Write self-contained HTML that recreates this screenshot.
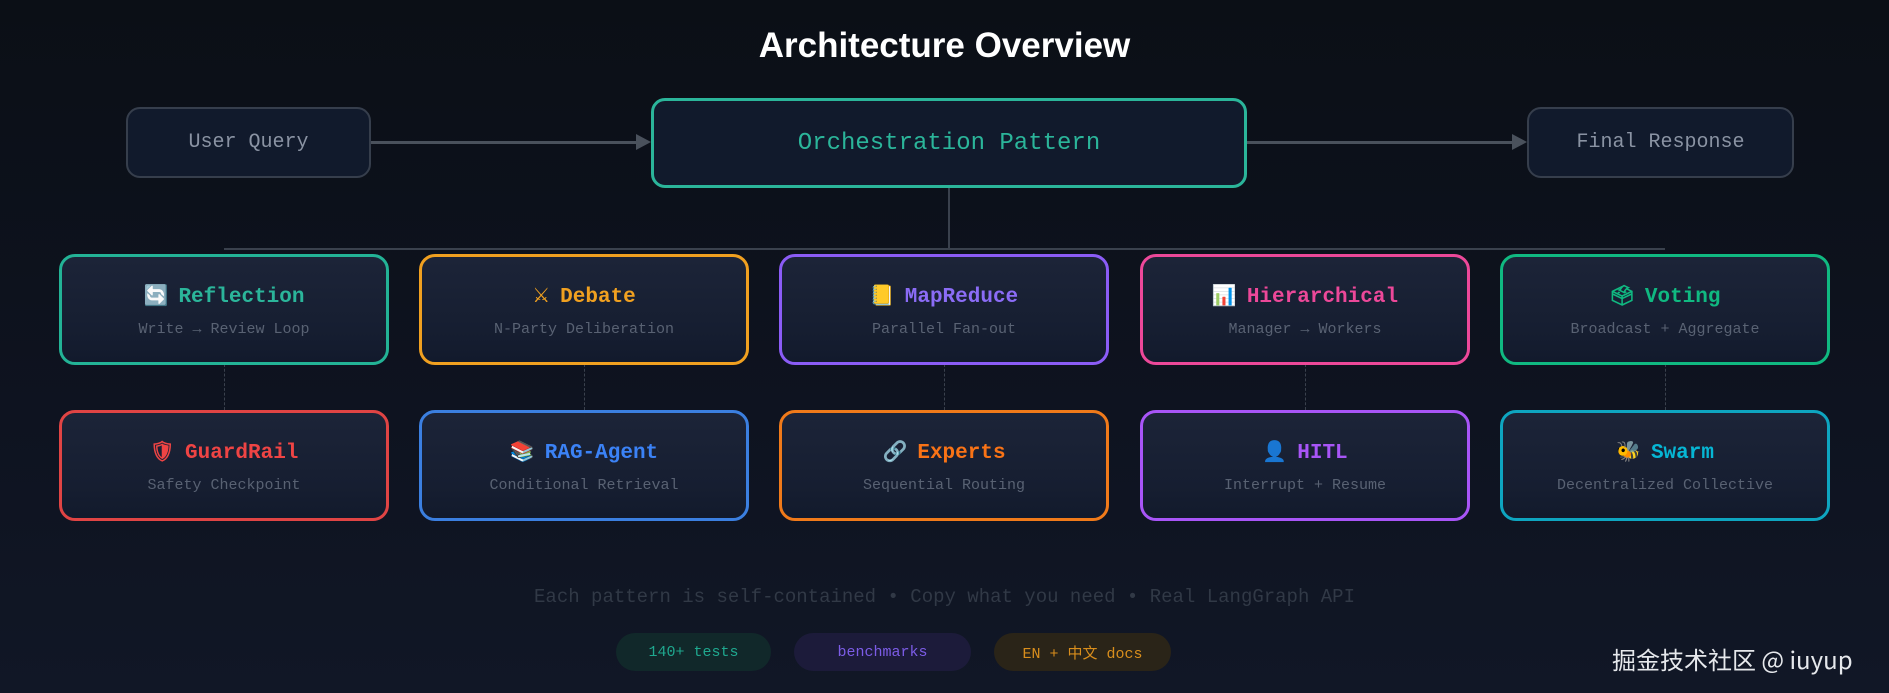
<!DOCTYPE html>
<html><head><meta charset="utf-8"><style>
*{margin:0;padding:0;box-sizing:border-box}
body{width:1889px;height:693px;overflow:hidden;background:linear-gradient(180deg,#0b0f16 0%,#0e1320 60%,#111726 100%);font-family:"Liberation Mono","Noto Sans CJK SC",monospace;position:relative}
.abs{position:absolute}
h1{position:absolute;top:26px;left:0;width:1889px;text-align:center;color:#fff;font:bold 35px "Liberation Sans",sans-serif}
.box{position:absolute;border-radius:14px;display:flex;align-items:center;justify-content:center;background:#111a2c}
.card{position:absolute;width:330px;height:111px;border:3px solid;border-radius:16px;background:linear-gradient(180deg,#1c2438 0%,#161e31 70%,#121a2c 100%);text-align:center}
.card .t{margin-top:26px;font-size:21px;font-weight:bold}
.card .s{margin-top:12px;font-size:15px;color:#596273}
.ic{font-size:20px;margin-right:10px;font-family:"DejaVu Sans",sans-serif}
.line{position:absolute;background:#3a414d}
.dash{position:absolute;width:0;border-left:1px dashed #3a414d}
.badge{position:absolute;top:633px;height:38px;border-radius:19px;display:flex;align-items:center;justify-content:center;font-size:15px}
</style></head><body>
<h1>Architecture Overview</h1>
<div class="box" style="left:126px;top:107px;width:245px;height:71px;border:2px solid #363e4c;color:#8a93a3;font-size:20px">User Query</div>
<div class="box" style="left:651px;top:98px;width:596px;height:90px;border:3px solid #2bb59a;color:#2bb59a;font-size:24px">Orchestration Pattern</div>
<div class="box" style="left:1527px;top:107px;width:267px;height:71px;border:2px solid #363e4c;color:#8a93a3;font-size:20px">Final Response</div>
<div class="line" style="left:371px;top:141px;width:270px;height:3px;background:#4a515c"></div>
<div class="abs" style="left:636px;top:134px;border-left:15px solid #4a515c;border-top:8px solid transparent;border-bottom:8px solid transparent"></div>
<div class="line" style="left:1247px;top:141px;width:270px;height:3px;background:#4a515c"></div>
<div class="abs" style="left:1512px;top:134px;border-left:15px solid #4a515c;border-top:8px solid transparent;border-bottom:8px solid transparent"></div>
<div class="line" style="left:948px;top:188px;width:2px;height:61px"></div>
<div class="line" style="left:224px;top:248px;width:1441px;height:2px"></div>
<div class="dash" style="left:224px;top:364px;height:46px"></div>
<div class="dash" style="left:584px;top:364px;height:46px"></div>
<div class="dash" style="left:944px;top:364px;height:46px"></div>
<div class="dash" style="left:1305px;top:364px;height:46px"></div>
<div class="dash" style="left:1665px;top:364px;height:46px"></div>

<div class="card" style="left:59px;top:254px;border-color:#23b396"><div class="t" style="color:#2bb59a"><span class="ic">🔄</span>Reflection</div><div class="s">Write → Review Loop</div></div>
<div class="card" style="left:419px;top:254px;border-color:#f0a020"><div class="t" style="color:#f0a020"><span class="ic">⚔</span>Debate</div><div class="s">N-Party Deliberation</div></div>
<div class="card" style="left:779px;top:254px;border-color:#8b5cf6"><div class="t" style="color:#8b6cf6"><span class="ic">📒</span>MapReduce</div><div class="s">Parallel Fan-out</div></div>
<div class="card" style="left:1140px;top:254px;border-color:#ec4899"><div class="t" style="color:#ec4899"><span class="ic">📊</span>Hierarchical</div><div class="s">Manager → Workers</div></div>
<div class="card" style="left:1500px;top:254px;border-color:#10b981"><div class="t" style="color:#10b981"><span class="ic">🗳</span>Voting</div><div class="s">Broadcast + Aggregate</div></div>

<div class="card" style="left:59px;top:410px;border-color:#e04444"><div class="t" style="color:#ef4444"><span class="ic">🛡</span>GuardRail</div><div class="s">Safety Checkpoint</div></div>
<div class="card" style="left:419px;top:410px;border-color:#3b7fe0"><div class="t" style="color:#3b82f6"><span class="ic">📚</span>RAG-Agent</div><div class="s">Conditional Retrieval</div></div>
<div class="card" style="left:779px;top:410px;border-color:#f07a1a"><div class="t" style="color:#f97316"><span class="ic">🔗</span>Experts</div><div class="s">Sequential Routing</div></div>
<div class="card" style="left:1140px;top:410px;border-color:#a855f7"><div class="t" style="color:#a855f7"><span class="ic">👤</span>HITL</div><div class="s">Interrupt + Resume</div></div>
<div class="card" style="left:1500px;top:410px;border-color:#0ea5c0"><div class="t" style="color:#06b6d4"><span class="ic">🐝</span>Swarm</div><div class="s">Decentralized Collective</div></div>

<div class="abs" style="left:0;top:586px;width:1889px;text-align:center;color:#313946;font-size:19px">Each pattern is self-contained • Copy what you need • Real LangGraph API</div>
<div class="badge" style="left:616px;width:155px;background:#11282a;color:#1fa88f">140+ tests</div>
<div class="badge" style="left:794px;width:177px;background:#1c1b3a;color:#7c5ce6">benchmarks</div>
<div class="badge" style="left:994px;width:177px;background:#2a2418;color:#d98e1c">EN + 中文 docs</div>
<div class="abs" style="left:1612px;top:641px;color:#e6e8ec;font:24px 'Noto Sans CJK SC','Liberation Sans',sans-serif">掘金技术社区 @ iuyup</div>
</body></html>
